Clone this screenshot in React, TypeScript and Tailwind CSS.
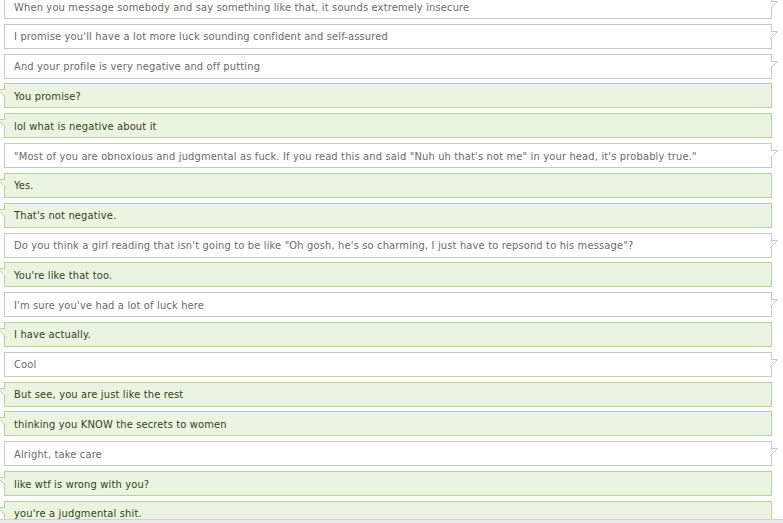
import React from "react";

type Msg = { from: "them" | "me"; text: string };

const messages: Msg[] = [
  { from: "them", text: "When you message somebody and say something like that, it sounds extremely insecure" },
  { from: "them", text: "I promise you'll have a lot more luck sounding confident and self-assured" },
  { from: "them", text: "And your profile is very negative and off putting" },
  { from: "me", text: "You promise?" },
  { from: "me", text: "lol what is negative about it" },
  {
    from: "them",
    text: "\"Most of you are obnoxious and judgmental as fuck. If you read this and said \"Nuh uh that's not me\" in your head, it's probably true.\"",
  },
  { from: "me", text: "Yes." },
  { from: "me", text: "That's not negative." },
  {
    from: "them",
    text: "Do you think a girl reading that isn't going to be like \"Oh gosh, he's so charming, I just have to repsond to his message\"?",
  },
  { from: "me", text: "You're like that too." },
  { from: "them", text: "I'm sure you've had a lot of luck here" },
  { from: "me", text: "I have actually." },
  { from: "them", text: "Cool" },
  { from: "me", text: "But see, you are just like the rest" },
  { from: "me", text: "thinking you KNOW the secrets to women" },
  { from: "them", text: "Alright, take care" },
  { from: "me", text: "like wtf is wrong with you?" },
  { from: "me", text: "you're a judgmental shit." },
];

function RightTail() {
  return (
    <svg className="absolute -right-[8px] top-[6px] w-[9px] h-[9px]" viewBox="0 0 9 9">
      <polygon points="0,0.5 7.5,0.5 0,8" fill="#ffffff" />
      <polyline points="0.5,0.5 7.5,0.5 0.5,7.5" fill="none" stroke="#c8c8c8" strokeWidth="1" />
    </svg>
  );
}

function LeftTail() {
  return (
    <svg className="absolute -left-[9px] top-[5px] w-[10px] h-[10px]" viewBox="0 0 10 10">
      <polygon points="10,0.5 1.5,0.5 10,9" fill="#ebf4e0" />
      <polyline points="9.5,0.5 1.5,0.5 9.5,8.5" fill="none" stroke="#b3d596" strokeWidth="1" />
    </svg>
  );
}

function Bubble({ msg }: { msg: Msg }) {
  const mine = msg.from === "me";
  return (
    <div
      className={
        mine
          ? "relative flex h-[25px] w-[768px] items-center border border-[#b3d596] bg-[#ebf4e0] px-[9px] pt-[1px] text-[#2f4418]"
          : "relative flex h-[25px] w-[768px] items-center border border-[#c8c8c8] bg-white px-[9px] pt-[1px] text-[#6a6a6a]"
      }
    >
      {mine ? <LeftTail /> : <RightTail />}
      <span className="whitespace-nowrap">{msg.text}</span>
    </div>
  );
}

export default function App() {
  return (
    <div
      className="relative h-[523px] w-[783px] overflow-hidden bg-white text-[11px] leading-none tracking-[0.16px]"
      style={{ fontFamily: "'DejaVu Sans Condensed', 'DejaVu Sans', Verdana, sans-serif" }}
    >
      <div className="mt-[-6px] flex flex-col gap-[4.82px] pl-[4px]">
        {messages.map((m, i) => (
          <Bubble key={i} msg={m} />
        ))}
      </div>
      <div className="absolute bottom-0 left-0 h-[4px] w-full border-t border-[#d2d2d2] bg-[#ececec]" />
    </div>
  );
}
